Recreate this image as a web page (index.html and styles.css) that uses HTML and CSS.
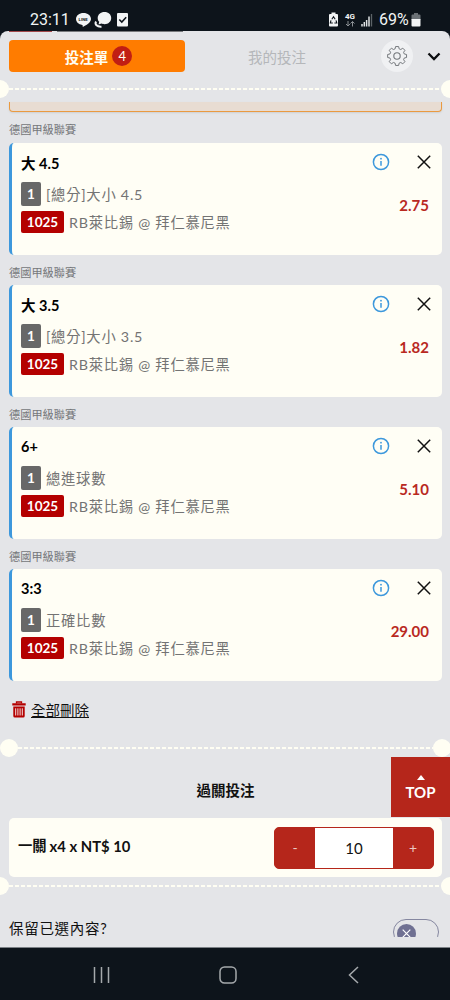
FILE: index.html
```html
<!DOCTYPE html>
<html lang="zh-Hant">
<head>
  <meta charset="UTF-8" />
  <meta name="viewport" content="width=device-width, initial-scale=1.0"/>
  <title>投注單</title>
  <link rel="stylesheet" href="styles.css">
</head>

<body>
  <!-- Icons used more than once -->
  <svg class="sprite" width="0" height="0">
    <symbol id="info" viewBox="0 0 18 18">
      <circle cx="9" cy="9" r="7.6" fill="none" stroke="#3d98dc" stroke-width="1.5"/>
      <circle cx="9" cy="5.7" r="0.9" fill="#3d98dc"/>
      <path d="M9 8v4.8" stroke="#3d98dc" stroke-width="1.5"/>
    </symbol>
    <symbol id="close" viewBox="0 0 14 14">
      <path d="M.8.8l12.4 12.4M13.2.8L.8 13.2" stroke="#111" stroke-width="1.5"/>
    </symbol>
  </svg>

  <div class="phone">
    <!-- Status bar -->
    <div class="status">
      <span class="time">23:11</span>
      <svg class="app-icons" width="54" height="18" viewBox="0 0 54 18">
        <path d="M8.500 2C4.300 2 1 4.600 1 8c0 3 2.700 5.400 6.200 5.900.6.1.5.8.6 2.100 3.200-1.500 8.200-4.400 8.200-8C16 4.600 12.700 2 8.500 2z" fill="#f2f4f5"/>
        <text x="3.600" y="9.800" class="line-text">LINE</text>
        <path d="M29.500 1c4 0 6.700 2.600 6.700 6s-2.700 6.200-6.700 6.200c-1.200 0-2 0-3-.6l-3 .9.700-2.700C23 9.900 22.700 8.500 22.700 7c0-3.400 2.900-6 6.800-6z" fill="#f2f4f5"/>
        <path d="M21 10.500c-1.500 3 1 5.500 5.500 5.200" fill="none" stroke="#f2f4f5" stroke-width="2"/>
        <rect x="42" y="2" width="11" height="13.500" rx="1" fill="#f2f4f5"/>
        <path d="M44.300 8.500l2.500 2.500 4.400-4.700" fill="none" stroke="#0d141b" stroke-width="1.600"/>
      </svg>
      <svg class="system-icons" width="46" height="18" viewBox="0 0 46 18">
        <path d="M3.500 1.500h4v1.500h1.500q1 0 1 1v10.500q0 1-1 1H2q-1 0-1-1V4q0-1 1-1h1.500z" fill="#f2f4f5"/>
        <path d="M3.800 8.300L5.500 5.800l1.700 2.500M8 9.300L8.800 12H6.400M4.800 12H2.300l.7-2.700" fill="none" stroke="#0d141b" stroke-width="1.100"/>
        <text x="17" y="8" class="net-text">4G</text>
        <path d="M20 10v5M18 13l2 2 2-2M24.500 15.500v-5M22.500 12.500l2-2 2 2" fill="none" stroke="#8b9094" stroke-width="1"/>
        <path d="M34 15.500v-2.500M36.300 15.500v-4.500M38.600 15.500V9M41 15.500V5.500" stroke="#dfe2e4" stroke-width="1.500"/>
        <path d="M43.500 15.500V3" stroke="#5c6368" stroke-width="1.300"/>
      </svg>
      <span class="percent">69%</span>
      <svg class="battery" width="10" height="14" viewBox="0 0 10 14">
        <path d="M3 0h4v1.500h1.500Q9.500 1.500 9.500 2.500V7h-9V2.500Q.5 1.500 1.500 1.500H3z" fill="#6b7176"/>
        <path d="M.5 6h9v6.500q0 1-1 1h-7q-1 0-1-1z" fill="#f2f4f5"/>
      </svg>
    </div>

    <div class="sheet">
      <div class="behind"></div>
      <!-- Tabs -->
      <div class="tabs">
        <button class="tab active">投注單<span class="count">4</span></button>
        <button class="tab">我的投注</button>
        <button class="gear">
          <svg width="22" height="22" viewBox="0 0 22 22" fill="none" stroke="#73777b" stroke-width="1.100" stroke-linejoin="round">
            <path d="M9.300 1.500h3.400l.5 2.500 1.900.8 2.200-1.500 2.400 2.400-1.500 2.200.8 1.900 2.500.5v3.400l-2.500.5-.8 1.900 1.500 2.200-2.400 2.400-2.200-1.500-1.900.8-.5 2.500H9.300l-.5-2.500-1.900-.8-2.200 1.500-2.400-2.400 1.500-2.200-.8-1.900-2.500-.5v-3.400L3 9.800l.8-1.900-1.500-2.200 2.400-2.400 2.200 1.500L8.800 4z" transform="translate(1.200 .2) scale(.9)"/>
            <circle cx="11" cy="11" r="3.200"/>
          </svg>
        </button>
        <svg class="chevron" width="14" height="9" viewBox="0 0 14 9">
          <path d="M1.500 1.500L7 7l5.500-5.500" fill="none" stroke="#0b0d0f" stroke-width="2.300"/>
        </svg>
      </div>

      <div class="divider edge"><i></i></div>

      <!-- Bet list -->
      <div class="bets">
        <div class="notice"></div>

        <h4>德國甲級聯賽</h4>
        <div class="card">
          <div class="title">大 4.5</div>
          <svg class="info" width="18" height="18"><use href="#info"/></svg>
          <svg class="close" width="14" height="14"><use href="#close"/></svg>
          <div class="detail">
            <p><span class="num">1</span>[總分]大小 4.5</p>
            <p><span class="code">1025</span>RB萊比錫 @ 拜仁慕尼黑</p>
          </div>
          <div class="odds">2.75</div>
        </div>

        <h4>德國甲級聯賽</h4>
        <div class="card">
          <div class="title">大 3.5</div>
          <svg class="info" width="18" height="18"><use href="#info"/></svg>
          <svg class="close" width="14" height="14"><use href="#close"/></svg>
          <div class="detail">
            <p><span class="num">1</span>[總分]大小 3.5</p>
            <p><span class="code">1025</span>RB萊比錫 @ 拜仁慕尼黑</p>
          </div>
          <div class="odds">1.82</div>
        </div>

        <h4>德國甲級聯賽</h4>
        <div class="card short">
          <div class="title">6+</div>
          <svg class="info" width="18" height="18"><use href="#info"/></svg>
          <svg class="close" width="14" height="14"><use href="#close"/></svg>
          <div class="detail">
            <p><span class="num">1</span>總進球數</p>
            <p><span class="code">1025</span>RB萊比錫 @ 拜仁慕尼黑</p>
          </div>
          <div class="odds">5.10</div>
        </div>

        <h4>德國甲級聯賽</h4>
        <div class="card short">
          <div class="title">3:3</div>
          <svg class="info" width="18" height="18"><use href="#info"/></svg>
          <svg class="close" width="14" height="14"><use href="#close"/></svg>
          <div class="detail">
            <p><span class="num">1</span>正確比數</p>
            <p><span class="code">1025</span>RB萊比錫 @ 拜仁慕尼黑</p>
          </div>
          <div class="odds">29.00</div>
        </div>

        <div class="clear">
          <svg width="14" height="17" viewBox="0 0 14 17">
            <path d="M4.500 2.500V1h5v1.500" fill="none" stroke="#b40000" stroke-width="1.300"/>
            <path d="M.3 2.300h13.400v2.200H.3zM1.300 5.500h11.400V15q0 1.500-1.500 1.500H2.800q-1.500 0-1.500-1.500z" fill="#b40000"/>
            <path d="M3.700 7.300v7.200M5.900 7.300v7.200M8.100 7.300v7.200M10.300 7.300v7.200" stroke="#f3dddc" stroke-width="1"/>
          </svg>
          <a href="#">全部刪除</a>
        </div>
      </div>

      <div class="divider"><i></i></div>

      <!-- Parlay -->
      <div class="parlay">
        <h3>過關投注</h3>
        <div class="stake">
          <div class="stake-name"><span>一關</span> x4 x NT$ 10</div>
          <div class="stepper">
            <button>-</button>
            <div class="amount">10</div>
            <button>+</button>
          </div>
        </div>
      </div>

      <div class="divider edge"><i></i></div>

      <div class="keep">
        <span>保留已選內容?</span>
        <div class="toggle">
          <div class="knob">
            <svg width="9" height="9" viewBox="0 0 9 9"><path d="M.7.7l7.600 7.600M8.300.7L.7 8.300" stroke="#fff" stroke-width="1.200"/></svg>
          </div>
        </div>
      </div>

      <button class="top"><i></i>TOP</button>
    </div>

    <!-- Android nav -->
    <div class="nav">
      <svg width="18" height="18" viewBox="0 0 18 18"><path d="M2.500 1v16M9.500 1v16M16.500 1v16" stroke="#a5a9ac" stroke-width="1.500"/></svg>
      <svg width="18" height="18" viewBox="0 0 18 18"><rect x="1" y="1" width="16" height="16" rx="4.500" fill="none" stroke="#a5a9ac" stroke-width="1.500"/></svg>
      <svg width="18" height="18" viewBox="0 0 18 18"><path d="M13 1L4.500 9l8.500 8" fill="none" stroke="#a5a9ac" stroke-width="1.500"/></svg>
    </div>
  </div>
</body>
</html>
```
FILE: styles.css
```css
* {
  box-sizing: border-box;
}
body {
  margin: 0;
  background-color: #0d141b;
  font-family: Lato, "Noto Sans CJK TC", sans-serif;
  color: #111;
}
h3, h4, p {
  margin: 0;
}
button {
  border: 0;
  padding: 0;
  font-family: inherit;
}
svg {
  display: block;
  flex: none;
}
.sprite {
  position: absolute;
}
.phone {
  width: 450px;
  height: 1000px;
  overflow: hidden;
}
/* status bar */
.status {
  height: 31px;
  padding: 8px 29px 0 30px;
  display: flex;
  align-items: center;
  font-family: Roboto, sans-serif;
  color: #f2f4f5;
}
.time {
  width: 45px;
  font-size: 16px;
  line-height: 20px;
}
.app-icons {
  margin-top: 1px;
}
.line-text {
  font: bold 4.3px Roboto, sans-serif;
  fill: #0d141b;
}
.system-icons {
  margin-left: auto;
}
.net-text {
  font: bold 8px Roboto, sans-serif;
  fill: #f2f4f5;
}
.percent {
  width: 31px;
  margin-left: 5px;
  font-size: 16px;
  line-height: 20px;
}
.battery {
  margin-left: 1px;
}
/* sheet */
.sheet {
  position: relative;
  height: 917px;
  background-color: #e4e5e8;
  border-radius: 8px 8px 0 0;
  border-bottom: 1px solid #7c8186;
}
/* sliver of the page under the sheet */
.behind {
  position: absolute;
  top: 0;
  left: 9px;
  width: 174px;
  height: 1px;
  background: linear-gradient(90deg, #a3494b 0 43px, transparent 43px 48px, #77797c 48px);
}
.tabs {
  height: 49px;
  padding: 9px 9px 0;
  display: flex;
  align-items: flex-start;
}
.tab {
  width: 176px;
  height: 32px;
  display: flex;
  align-items: center;
  justify-content: center;
  background: none;
  border-radius: 4px;
  font-size: 14.5px;
  color: #b5b7ba;
}
.tab.active {
  padding-left: 3px;
  background-color: #ff7c00;
  color: #fffef3;
  font-weight: bold;
}
.tab + .tab {
  width: 184px;
}
.count {
  width: 20px;
  height: 20px;
  margin-left: 4px;
  border-radius: 50%;
  background-color: #c11e13;
  font-size: 13px;
  line-height: 20px;
  font-weight: normal;
}
.gear {
  width: 32px;
  height: 32px;
  margin-left: 12px;
  display: flex;
  align-items: center;
  justify-content: center;
  border-radius: 50%;
  background-color: #f0f1f3;
}
.chevron {
  margin: 12px 0 0 14px;
}
/* ticket perforation */
.divider {
  height: 18px;
  margin-right: -1px;
  display: flex;
  align-items: center;
  justify-content: space-between;
}
.divider::before,
.divider::after {
  content: "";
  width: 18px;
  height: 18px;
  border-radius: 50%;
  background-color: #fffef3;
}
.divider i {
  flex: 1;
  height: 2px;
  background: repeating-linear-gradient(90deg, #fffef3 0 4px, transparent 4px 6px);
}
.divider.edge {
  margin: 0 -9px;
}
/* bets */
.bets {
  height: 641px;
  padding: 4px 8px 0 9px;
}
.notice {
  height: 10px;
  background-color: #e8dcd2;
  border: 1px solid #ea9a40;
  border-top: 0;
  border-radius: 0 0 4px 4px;
  box-shadow: 0 1px 2px #cfd0d2;
}
h4 {
  height: 30px;
  padding-top: 9.5px;
  font-size: 11.2px;
  line-height: 18px;
  font-weight: normal;
  color: #75777a;
}
.notice + h4 {
  height: 30.5px;
  padding-top: 9px;
}
.card {
  height: 112px;
  padding: 10px 12px 0 9px;
  display: grid;
  grid-template-columns: 1fr 18px 40px;
  grid-template-rows: 30px 58px;
  background-color: #fffef5;
  border-left: 3px solid #3d98dc;
  border-radius: 5px;
}
.title {
  font-size: 14.5px;
  line-height: 22px;
  font-weight: bold;
  color: #000;
}
/* titles without Chinese glyphs sit a little higher */
.short {
  padding-top: 9.5px;
}
.card .info {
  margin-top: 0.5px;
}
.card .close {
  margin: 2.5px 0 0 auto;
  position: relative;
  left: 1px;
}
.detail p {
  display: flex;
  align-items: center;
  height: 24px;
  margin-bottom: 4px;
  padding-top: 1px;
  font-size: 14.3px;
  line-height: 20px;
  letter-spacing: 0.75px;
  white-space: nowrap;
  color: #737373;
}
.num, .code {
  position: relative;
  top: -1px;
  margin-right: 5px;
  border-radius: 2px;
  color: #fff;
  font-size: 13.5px;
  font-weight: bold;
  letter-spacing: 0;
  text-align: center;
}
.num {
  width: 20px;
  line-height: 24px;
  background-color: #686868;
}
.code {
  width: 43px;
  line-height: 22px;
  background-color: #b40000;
}
.odds {
  grid-column: 2 / 4;
  padding: 11.5px 1px 0 0;
  justify-self: end;
  font-size: 15px;
  line-height: 22px;
  font-weight: bold;
  color: #b9291f;
}
.clear {
  display: flex;
  align-items: center;
  gap: 5px;
  height: 24px;
  margin-top: 17px;
  padding-left: 3px;
}
.clear a {
  padding-top: 3px;
  color: #111;
  font-size: 14.5px;
  line-height: 22px;
  text-underline-offset: 1px;
}
/* parlay */
.parlay {
  height: 120px;
  padding: 22px 8px 0 9px;
}
h3 {
  height: 39px;
  padding-top: 1px;
  font-size: 14.5px;
  line-height: 22px;
  text-align: center;
}
.stake {
  height: 59px;
  padding: 0 8px 0 9px;
  display: flex;
  align-items: center;
  justify-content: space-between;
  background-color: #fffef5;
  border-radius: 5px;
}
.stake-name {
  display: flex;
  gap: 3px;
  align-items: center;
  padding-bottom: 4px;
  font-size: 14.8px;
  line-height: 22px;
  font-weight: bold;
}
.stake-name span {
  padding-top: 1px;
  font-size: 14.3px;
}
.stepper {
  width: 160px;
  height: 42px;
  display: flex;
  border: 1px solid #b5261b;
  border-radius: 5px;
  background-color: #b5261b;
}
.stepper button {
  width: 40px;
  background: none;
  color: #ecc9c3;
  font-size: 14px;
}
.amount {
  flex: 1;
  background-color: #fff;
  font-size: 15px;
  line-height: 40px;
  text-align: center;
}
.keep {
  height: 42px;
  padding: 0 11px 0 9px;
  display: flex;
  overflow: hidden;
  font-size: 14.5px;
  letter-spacing: 0.7px;
}
.keep span {
  flex: 1;
  padding-top: 23px;
  line-height: 22px;
}
.toggle {
  width: 46px;
  height: 26px;
  margin-top: 24px;
  padding: 4px 3px;
  border: 1px solid #8587a0;
  border-radius: 13px;
}
.knob {
  width: 19px;
  height: 19px;
  display: flex;
  align-items: center;
  justify-content: center;
  border-radius: 50%;
  background-color: #6f7092;
}
/* back to top floats over the slip */
.top {
  position: absolute;
  top: 726px;
  right: 0;
  width: 59px;
  height: 60px;
  padding-top: 2px;
  background-color: #b5261b;
  color: #fff;
  font-size: 15px;
  font-weight: bold;
}
.top i {
  display: block;
  width: 0;
  margin: 0 auto 3px;
  border: 4.5px solid transparent;
  border-top: 0;
  border-bottom: 5px solid #fff;
}
.nav {
  height: 52px;
  padding: 2px 87px 0 92px;
  display: flex;
  align-items: center;
  justify-content: space-between;
}
```
